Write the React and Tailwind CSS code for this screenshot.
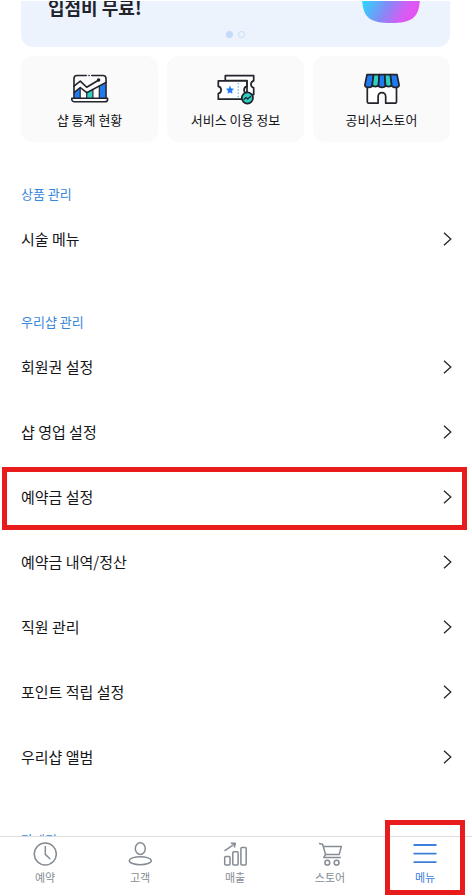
const StatsIcon = () => (
  <svg className="w-10 h-[34px]" viewBox="0 0 40 34" fill="none" stroke="#22232b" strokeWidth="1.6" strokeLinejoin="round" strokeLinecap="round">
    <path d="M4.3 20.5L10 15.8V26H4.3z" fill="#1f7bf2" stroke="none" />
    <path d="M16.7 20.5L22.7 17.4V26h-6z" fill="#2fcfc4" stroke="none" />
    <path d="M29.5 14L35.8 10.5V26h-6.3z" fill="#1f7bf2" stroke="none" />
    <path d="M10.2 16v10M16.7 20.8V26M22.9 17.5V26M29.3 14V26" strokeWidth="1.2" />
    <path d="M4 26V6.5a3 3 0 0 1 3-3h9.2M21.8 3.5H33a3 3 0 0 1 3 3V26" />
    <path d="M19 3.5h.1" />
    <path d="M4 14.2l6.3-5.1 6.4 6.2L28.4 8.2M4 20.6l6.3-5.1 6.4 5.2L36 10.4" />
    <circle cx="28.6" cy="8" r="1" fill="#22232b" />
    <path d="M1.8 26.2h35.8v1a2.6 2.6 0 0 1-2.6 2.6H4.4a2.6 2.6 0 0 1-2.6-2.6z" fill="#fff" />
  </svg>
);

const TicketIcon = () => (
  <svg className="w-10 h-[34px]" viewBox="0 0 40 34" fill="none" stroke="#22232b" strokeWidth="1.7" strokeLinejoin="round" strokeLinecap="round">
    <path d="M9.3 8.5V3.7h28.4v5.1a3.6 3.6 0 0 0 0 7v6.8H31V8.7H9.3z" fill="#fff" />
    <path d="M2.3 8.8h28.6v5.6a3.7 3.7 0 0 0 0 7.2v5.6H2.3v-5.6a3.7 3.7 0 0 0 0-7.2z" fill="#fff" />
    <path d="M14 14.6l1.1 2.2 2.4.3-1.8 1.7.4 2.4-2.1-1.1-2.1 1.1.4-2.4-1.8-1.7 2.4-.3z" fill="#1f7bf2" stroke="#1f7bf2" strokeWidth="0.6" />
    <path d="M22.2 11v15" stroke="#2f9bc0" strokeWidth="1" strokeDasharray="1.3 1.9" strokeLinecap="butt" />
    <circle cx="31.4" cy="26" r="5.6" fill="#2fcfc4" />
    <path d="M28 27.3l2.2-1.8 1.4 1.5 3-2.6" strokeWidth="1.3" />
  </svg>
);

const StoreIcon = () => (
  <svg className="w-10 h-[34px]" viewBox="0 0 40 34" fill="none" stroke="#22232b" strokeWidth="1.7" strokeLinejoin="round" strokeLinecap="round">
    <path d="M5.3 14v15.8a1.4 1.4 0 0 0 1.4 1.4h9.4v-6.8a3.8 3.8 0 0 1 7.6 0v6.8h9.4a1.4 1.4 0 0 0 1.4-1.4V14z" fill="#fff" />
    <path d="M5 2.6h6.6L10.3 13a3.6 2.4 0 0 1-7.4 0z" fill="#1f7bf2" />
    <path d="M11.6 2.6h5.6L16.6 13a3.4 2.4 0 0 1-6.4 0z" fill="#2fcfc4" />
    <path d="M17.2 2.6h5.6l.6 10.4a3.4 2.4 0 0 1-6.8 0z" fill="#1f7bf2" />
    <path d="M22.8 2.6h5.6L29.8 13a3.4 2.4 0 0 1-6.4 0z" fill="#2fcfc4" />
    <path d="M28.4 2.6H35L37.1 13a3.6 2.4 0 0 1-7.4 0z" fill="#1f7bf2" />
  </svg>
);

const ClockIcon = () => (
  <svg className="w-6 h-6" viewBox="0 0 24 24" fill="none" stroke="currentColor" strokeWidth="1.5" strokeLinecap="round">
    <circle cx="12.3" cy="12" r="11" />
    <path d="M12.3 4.6v7.8l4.6 4.4" />
  </svg>
);

const CustomerIcon = () => (
  <svg className="w-6 h-6" viewBox="0 0 24 24" fill="none" stroke="currentColor" strokeWidth="1.5">
    <ellipse cx="12.3" cy="6.6" rx="5" ry="5.8" />
    <ellipse cx="12.3" cy="18.7" rx="11" ry="4" />
  </svg>
);

const SalesIcon = () => (
  <svg className="w-6 h-6" viewBox="0 0 24 24" fill="none" stroke="currentColor" strokeWidth="1.5" strokeLinejoin="round">
    <rect x="1.7" y="14.4" width="5.3" height="8.6" rx="1" />
    <rect x="9.8" y="9.8" width="5.3" height="13.2" rx="1" />
    <rect x="17.9" y="5.4" width="5.3" height="17.6" rx="1" />
    <path d="M1.5 8.8L12 1.6M7.8 1.3h4.5l-1 4.2" />
  </svg>
);

const CartIcon = () => (
  <svg className="w-6 h-6" viewBox="0 0 24 24" fill="none" stroke="currentColor" strokeWidth="1.5" strokeLinejoin="round">
    <path d="M1 1.5l3.6.7 2.9 10.2-1.7 3h17" />
    <path d="M5.2 4.4h18.2l-2.2 8H7.5" />
    <circle cx="9.3" cy="20.7" r="2.4" />
    <circle cx="18.6" cy="20.7" r="2.4" />
  </svg>
);

const MenuIcon = () => (
  <svg className="w-6 h-6" viewBox="0 0 24 24" fill="none" stroke="currentColor" strokeWidth="1.8">
    <path d="M.5 3h23M.5 11.6h23M.5 20.2h23" />
  </svg>
);

const shortcuts = [
  { label: '샵 통계 현황', icon: StatsIcon },
  { label: '서비스 이용 정보', icon: TicketIcon },
  { label: '공비서스토어', icon: StoreIcon },
];

const sections = [
  { title: '상품 관리', items: ['시술 메뉴'] },
  {
    title: '우리샵 관리',
    items: ['회원권 설정', '샵 영업 설정', '예약금 설정', '예약금 내역/정산', '직원 관리', '포인트 적립 설정', '우리샵 앨범'],
  },
  { title: '마케팅', items: [] },
];

const tabs = [
  { label: '예약', icon: ClockIcon },
  { label: '고객', icon: CustomerIcon },
  { label: '매출', icon: SalesIcon },
  { label: '스토어', icon: CartIcon },
  { label: '메뉴', icon: MenuIcon },
];

const HIGHLIGHTED_ITEM = '예약금 설정';
const ACTIVE_TAB = '메뉴';

const Banner = () => (
  <div className="flex flex-col justify-end h-[46px] overflow-hidden rounded-b-xl bg-[#ecf3fd]">
    <div className="flex items-end justify-between pl-[27px] pr-[30px] mb-2">
      <p className="text-lg leading-8 font-bold text-[#22232b]">입점비 무료!</p>
      <svg className="w-[58px] h-[58px] shrink-0" viewBox="0 0 58 58">
        <defs>
          <linearGradient id="blob" x1="0" y1="0.55" x2="0.85" y2="1">
            <stop offset="0" stopColor="#1fe0ff" />
            <stop offset="0.5" stopColor="#8a86f5" />
            <stop offset="0.8" stopColor="#d65cf5" />
            <stop offset="1" stopColor="#e552f2" />
          </linearGradient>
        </defs>
        <path d="M29 0C52 0 58 6 58 29S52 58 29 58 0 52 0 29 6 0 29 0z" fill="url(#blob)" />
      </svg>
    </div>
    <div className="flex justify-center gap-[5px] pb-[9px]">
      <span className="w-[7px] h-[7px] rounded-full bg-[#c3dafa]"></span>
      <span className="w-[7px] h-[7px] rounded-full border border-[#c3dafa]"></span>
    </div>
  </div>
);

const MenuRow = ({ label }) => (
  <li className="relative">
    <a href="#" className="flex items-center justify-between h-[65px] pl-[21px] pr-5">
      <span className="text-[15px] leading-6 text-[#15161a]">{label}</span>
      <svg className="w-[9px] h-[14px]" viewBox="0 0 9 14" fill="none" stroke="#26272d" strokeWidth="1.3">
        <path d="M1 .8L7.8 7 1 13.2" />
      </svg>
    </a>
    {label === HIGHLIGHTED_ITEM && (
      <div className="absolute top-[3px] -bottom-px left-0.5 right-[5px] border-[5px] border-[#e81c1c] pointer-events-none"></div>
    )}
  </li>
);

const App = () => {
  return (
    <div className="flex flex-col h-screen bg-white font-['Noto_Sans_CJK_KR',sans-serif]">
      <main className="flex-1 min-h-0 overflow-y-auto [scrollbar-width:none] pt-px">
        <div className="pl-[21px] pr-[22px]">
          <Banner />
          <div className="grid grid-cols-3 gap-[9px] mt-[9px]">
            {shortcuts.map(({ label, icon: Icon }) => (
              <a key={label} href="#" className="flex flex-col items-center gap-1 pt-4 pb-3 rounded-xl bg-[#fafafb]">
                <Icon />
                <span className="text-[13px] leading-5 text-[#15161a]">{label}</span>
              </a>
            ))}
          </div>
        </div>

        <div className="flex flex-col gap-[41px] mt-[42px]">
          {sections.map(({ title, items }) => (
            <section key={title} className="flex flex-col gap-0.5">
              <h2 className="pl-[21px] text-[13px] leading-5 text-[#3787dc]">{title}</h2>
              <ul>
                {items.map((item) => (
                  <MenuRow key={item} label={item} />
                ))}
              </ul>
            </section>
          ))}
        </div>
      </main>

      <nav className="flex justify-between h-[60px] pl-5 pr-[22px] border-t border-[#dcdde0] bg-white">
        {tabs.map(({ label, icon: Icon }) => (
          <a
            key={label}
            href="#"
            className={`relative flex flex-col items-center gap-0.5 w-[50px] pt-[5px] ${label === ACTIVE_TAB ? 'text-[#3a80dc]' : 'text-[#858c94]'}`}
          >
            <Icon />
            <span className="text-[11px] leading-[18px]">{label}</span>
            {label === ACTIVE_TAB && (
              <span className="absolute -top-[17px] bottom-px -left-[15px] -right-[15px] border-[5px] border-[#e81c1c] pointer-events-none"></span>
            )}
          </a>
        ))}
      </nav>
    </div>
  );
};

export default App;
